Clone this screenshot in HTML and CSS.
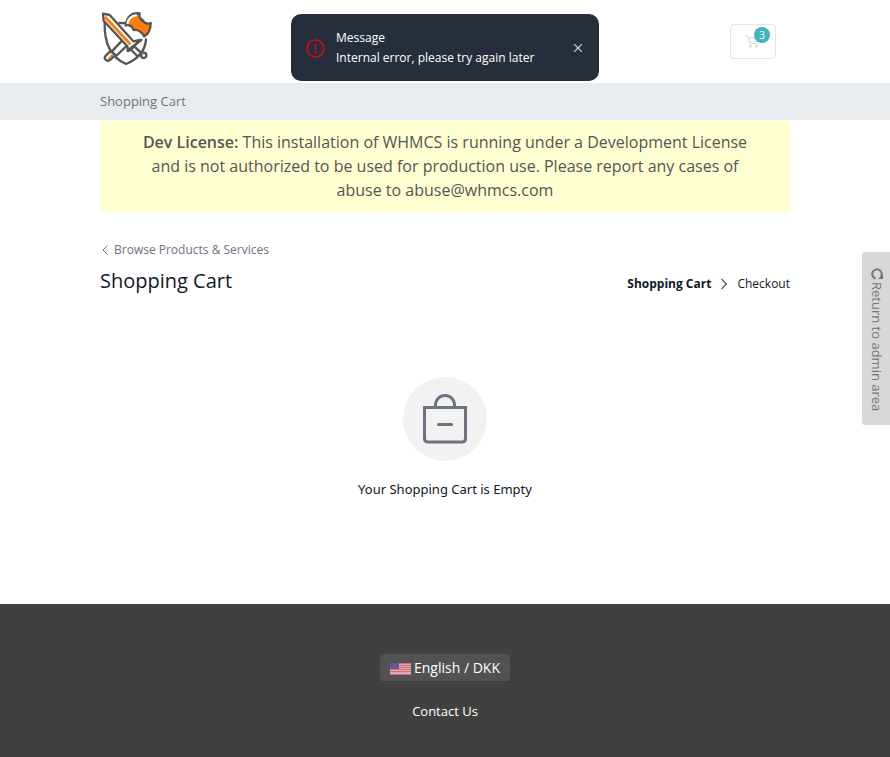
FILE: index.html
```html
<!DOCTYPE html>
<html lang="en">
<head>
<meta charset="utf-8">
<title>Shopping Cart</title>
<link rel="stylesheet" href="styles.css">
</head>
<body>
<header class="header">
  <div class="container header-row">
    <a class="logo" href="#" aria-label="Home">
      <svg width="56" height="56" viewBox="30 30 168 168" fill="none" stroke="#545454" stroke-width="7" stroke-linejoin="round" stroke-linecap="round">
        <path fill="#fff" d="M44 66C42 128 62 172 108 192C150 174 166 146 168 118M88 69Q98 70 108 69"/>
        <path d="M96 122L68 152M108 140L78 168"/>
        <path fill="#fff" d="M62 153L47 167Q41 174 48 180Q55 185 61 179L76 165Z"/>
        <path stroke="#ff7d0a" stroke-width="6" d="M67 165L57 175"/>
        <path fill="#ff7d0a" d="M149 40Q114 36 107 76Q124 73 131 90Q150 88 163 109Q182 98 182 69Q168 75 158 62Q146 56 149 40Z"/>
        <path stroke="#fff" stroke-width="7" d="M137 46Q117 49 113 69"/>
        <circle cx="156" cy="60" r="5" fill="#545454" stroke="none"/>
        <path fill="#fff" d="M39 41L59 45L130 124L150 120L126 145L115 153L112 139L41 62Z"/>
        <path stroke="#ff7d0a" stroke-width="9" stroke-linecap="butt" d="M45 51L121 133"/>
        <path d="M112 152L154 120M136 142L153 158"/>
        <path d="M124 150L142 168"/>
        <circle cx="161" cy="166" r="8" fill="#fff"/>
        <path stroke="#ff7d0a" stroke-width="5" d="M157 161L158 162"/>
      </svg>
    </a>
    <button class="cart" type="button" aria-label="Cart, 3 items">
      <svg width="15" height="15" viewBox="0 0 17 15" fill="none" stroke="#dedede" stroke-width="1.4"><path d="M0 1H3L5.500 10H14M4 3.500H15.500L14 7.500H5"/><circle cx="6" cy="13" r="1.200"/><circle cx="13" cy="13" r="1.200"/></svg>
      <span class="badge">3</span>
    </button>
  </div>
</header>
<nav class="crumbs" aria-label="Breadcrumb"><div class="container">Shopping Cart</div></nav>
<main class="container main">
  <div class="license"><strong>Dev License:</strong> This installation of WHMCS is running under a Development License and is not authorized to be used for production use. Please report any cases of abuse to abuse@whmcs.com</div>
  <a class="back" href="#"><svg width="6" height="10" viewBox="0 0 6 10" fill="none" stroke="#6b7280"><path d="M5.500 .5L1 5L5.500 9.500"/></svg>Browse Products &amp; Services</a>
  <div class="title-row">
    <h1>Shopping Cart</h1>
    <div class="steps">
      <strong>Shopping Cart</strong>
      <svg width="6" height="12" viewBox="0 0 6 12" fill="none" stroke="#4b5563" stroke-width="1.200"><path d="M.5 1L5.300 6L.5 11"/></svg>
      <span>Checkout</span>
    </div>
  </div>
  <section class="empty">
    <div class="bag"><svg width="44" height="50" viewBox="0 0 44 50" fill="none" stroke="#6b7280" stroke-width="3"><path d="M1.500 13.500H42.500V44.500Q42.500 48 39 48H5Q1.500 48 1.500 44.500Z"/><path d="M12.500 13V11A9.500 9.500 0 0 1 31.500 11V13"/><path stroke-linecap="round" d="M15.500 30.500H28.500"/></svg></div>
    <p>Your Shopping Cart is Empty</p>
  </section>
</main>
<footer class="footer">
  <button class="lang" type="button">
    <svg width="21" height="12" viewBox="0 0 21 12"><path fill="#e6a5ad" d="M0 0H21V12H0Z"/><path stroke="#d1707c" d="M0 .5H21M0 2.500H21M0 4.500H21M0 6.500H21M0 8.500H21M0 11.500H21"/><path fill="#5b5a91" d="M0 0H9V6H0Z"/></svg>
    English / DKK
  </button>
  <a class="contact" href="#">Contact Us</a>
</footer>
<a class="admin" href="#"><svg width="12" height="12" viewBox="0 0 12 12" fill="none" stroke="#777" stroke-width="2"><path d="M4.500 10.500A4.700 4.700 0 1 1 10 8.500"/><path fill="#777" stroke="none" d="M12 11H7L12 6Z"/></svg>Return to admin area</a>
<div class="toast" role="alert">
  <svg width="19" height="19" viewBox="0 0 19 19" fill="none" stroke="#f00014" stroke-width="1.500"><circle cx="9.500" cy="9.500" r="8.400"/><path d="M9.500 5V11M9.500 12.300V14"/></svg>
  <div class="toast-text"><div>Message</div><div>Internal error, please try again later</div></div>
  <button class="close" type="button" aria-label="Close"><svg width="8" height="8" viewBox="0 0 8 8" stroke="#d1d5db" stroke-width="1.200"><path d="M0 0L8 8M8 0L0 8"/></svg></button>
</div>
</body>
</html>
```
FILE: styles.css
```css
* { box-sizing: border-box; }
body { margin: 0; min-height: 100vh; display: flex; flex-direction: column; font: 13px/20px "Open Sans", sans-serif; color: #111827; background: #fff; }
a { color: inherit; text-decoration: none; }
button { font: inherit; color: inherit; border: 0; padding: 0; background: none; }
svg { display: block; flex: none; }
.container { width: 100%; max-width: 720px; margin: 0 auto; padding: 0 15px; }
.header { padding: 10px 0 17px; }
.header-row { display: flex; justify-content: space-between; align-items: flex-start; }
.cart { position: relative; width: 46px; height: 35px; margin: 14px 14px 0 0; padding: 0 14px; border: 1px solid #e4e4e4; border-radius: 4px; }
.badge { position: absolute; top: 2px; right: 5px; width: 16px; height: 16px; border-radius: 8px; background: #42b3c1; color: #fff; font-size: 10px; line-height: 16px; }
.crumbs { background: #e8ecef; color: #6c757d; padding: 8px 0 9px; }
.main { flex: 1; }
.license { background: #ffffd2; color: #555; text-align: center; font-size: 16px; line-height: 24px; padding: 10px 40px; }
.license strong { font-weight: 600; }
.back { display: flex; align-items: center; gap: 6px; margin-top: 28px; padding-left: 2px; color: #6b7280; font-size: 12px; }
.title-row { display: flex; align-items: center; justify-content: space-between; margin-top: 7px; }
h1 { margin: 0; font-size: 20px; line-height: 28px; font-weight: 400; }
.steps { display: flex; align-items: center; gap: 10px; font-size: 12px; padding-top: 6px; }
.empty { margin-top: 82px; text-align: center; font-family: "Noto Sans", sans-serif; }
.bag { display: flex; align-items: center; justify-content: center; width: 84px; height: 84px; margin: 0 auto; border-radius: 50%; background: #f2f2f2; }
.empty p { margin: 18px 0 0; }
.footer { display: flex; flex-direction: column; align-items: center; gap: 20px; background: #404040; color: #fff; padding: 50px 0 36px; }
.lang { display: flex; align-items: center; gap: 3px; height: 27px; padding: 0 10px; border-radius: 3px; background: #525252; font-size: 14px; }
.lang svg { margin-top: 2px; }
.admin { position: fixed; right: 0; top: 252px; display: flex; align-items: center; gap: 2px; writing-mode: vertical-rl; width: 28px; padding: 16px 0 14px 2px; border-radius: 3px 0 0 3px; background: #d8d8d8; color: #777; }
.toast { position: fixed; top: 14px; left: 50%; transform: translateX(-50%); display: flex; align-items: center; width: 308px; padding: 14px 17px 13px 15px; border-radius: 10px; background: #272e3b; color: #fff; font-size: 12px; }
.toast-text { flex: 1; padding-left: 11px; }
```
